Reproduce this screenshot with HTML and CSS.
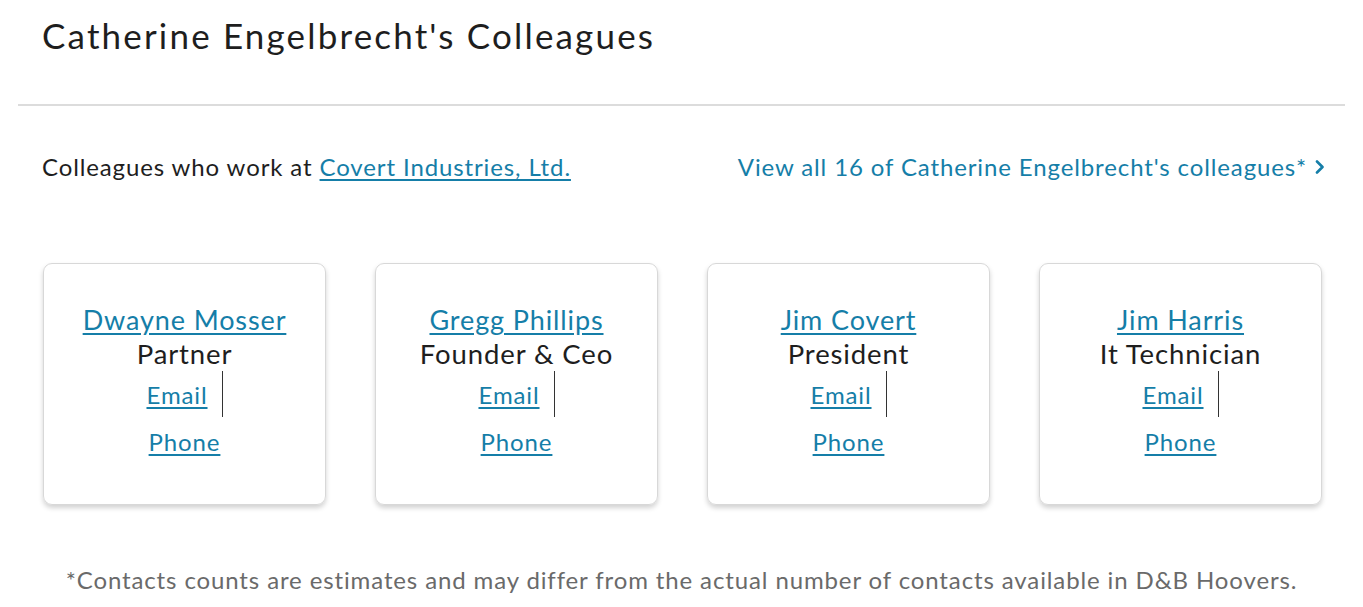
FILE: index.html
```html
<!DOCTYPE html>
<html lang="en">
<head>
<meta charset="utf-8">
<title>Colleagues</title>
<link rel="stylesheet" href="styles.css">
</head>
<body>
<div class="page">
  <h1 class="title">Catherine Engelbrecht's Colleagues</h1>
  <div class="divider"></div>
  <div class="subhead">
    <p class="subhead-text">Colleagues who work at <a href="#" class="link">Covert Industries, Ltd.</a></p>
    <a href="#" class="view-all">View all 16 of Catherine Engelbrecht's colleagues*<svg class="chev" width="10" height="14" viewBox="0 0 10 14"><path d="M2 1.5 L7.5 7 L2 12.5" fill="none" stroke="currentColor" stroke-width="2.6" stroke-linecap="round" stroke-linejoin="round"/></svg></a>
  </div>
  <div class="cards">
    <div class="card">
      <a href="#" class="name">Dwayne Mosser</a>
      <div class="role">Partner</div>
      <ul class="contacts">
        <li class="email"><a href="#">Email</a></li>
        <li class="phone"><a href="#">Phone</a></li>
      </ul>
    </div>
    <div class="card">
      <a href="#" class="name">Gregg Phillips</a>
      <div class="role">Founder &amp; Ceo</div>
      <ul class="contacts">
        <li class="email"><a href="#">Email</a></li>
        <li class="phone"><a href="#">Phone</a></li>
      </ul>
    </div>
    <div class="card">
      <a href="#" class="name">Jim Covert</a>
      <div class="role">President</div>
      <ul class="contacts">
        <li class="email"><a href="#">Email</a></li>
        <li class="phone"><a href="#">Phone</a></li>
      </ul>
    </div>
    <div class="card">
      <a href="#" class="name">Jim Harris</a>
      <div class="role">It Technician</div>
      <ul class="contacts">
        <li class="email"><a href="#">Email</a></li>
        <li class="phone"><a href="#">Phone</a></li>
      </ul>
    </div>
  </div>
  <p class="footnote">*Contacts counts are estimates and may differ from the actual number of contacts available in D&amp;B Hoovers.</p>
</div>
</body>
</html>
```

FILE: styles.css
```css
html, body {
  margin: 0;
  padding: 0;
  background: #ffffff;
}
body {
  font-family: "Lato", "Open Sans", sans-serif;
  color: #1e1e1e;
  letter-spacing: 0.055em;
}
.page {
  width: 1363px;
}
.title {
  margin: 0;
  padding: 13px 0 0 42px;
  height: 88px;
  box-sizing: border-box;
  font-size: 35px;
  font-weight: 400;
  line-height: 44px;
  letter-spacing: 0.062em;
  color: #1e1e1e;
}
.divider {
  margin: 16px 18px 0 18px;
  height: 2px;
  background: #dcdcdc;
}
.subhead {
  display: flex;
  justify-content: space-between;
  align-items: center;
  padding: 0 38px 0 42px;
  height: 122px;
}
.subhead-text {
  margin: 0;
  font-size: 24px;
  line-height: 30px;
}
.link {
  color: #157ea8;
  text-decoration: underline;
  text-underline-offset: 3px;
}
.view-all {
  color: #157ea8;
  text-decoration: none;
  font-size: 24px;
  line-height: 30px;
  display: flex;
  align-items: center;
}
.chev {
  margin-left: 8px;
}
.cards {
  display: grid;
  grid-template-columns: repeat(4, 283px);
  column-gap: 49px;
  padding: 35px 0 0 43px;
}
.card {
  height: 242px;
  box-sizing: border-box;
  border: 1px solid #d8d8d8;
  border-radius: 9px;
  box-shadow: 0 3px 5px rgba(0, 0, 0, 0.18);
  display: flex;
  flex-direction: column;
  align-items: center;
  padding-top: 39px;
}
.name {
  font-size: 27px;
  line-height: 34px;
  color: #157ea8;
  text-decoration: underline;
  text-underline-offset: 3px;
}
.role {
  font-size: 27.5px;
  line-height: 34px;
  color: #1e1e1e;
}
.contacts {
  list-style: none;
  margin: 0;
  padding: 0;
  display: flex;
  flex-direction: column;
  align-items: center;
}
.contacts a {
  color: #157ea8;
  text-decoration: underline;
  text-underline-offset: 3px;
  font-size: 24px;
}
.email {
  height: 46px;
  line-height: 48px;
  padding-right: 14px;
  border-right: 1px solid #333;
}
.phone {
  line-height: 50px;
}
.footnote {
  margin: 60px 0 0 0;
  text-align: center;
  font-size: 24px;
  line-height: 30px;
  color: #6a6a6a;
}
```
